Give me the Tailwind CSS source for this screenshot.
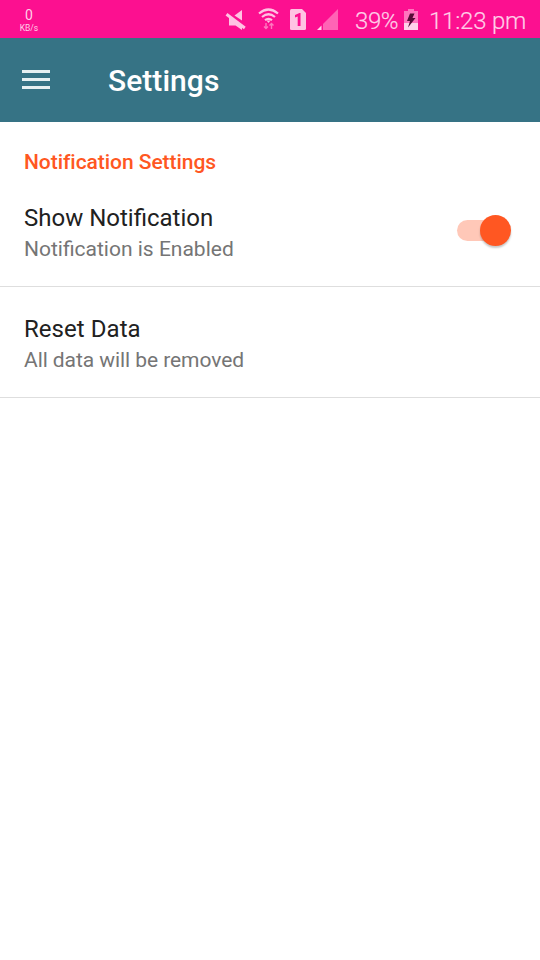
<!DOCTYPE html>
<html lang="en">
<head>
<meta charset="utf-8">
<title>Settings</title>
<script src="https://cdn.jsdelivr.net/npm/@tailwindcss/browser@4"></script>
</head>
<body class="w-[540px] h-[960px] overflow-hidden bg-white font-[Roboto,sans-serif]">
<div class="flex h-[38px] bg-[#fc1090] text-[#ffcfe8]">
  <div class="ml-[19px] w-5 pt-[7px] flex flex-col items-center">
    <span class="text-[14px] leading-[17px]">0</span>
    <span class="text-[8.500px] leading-[9px] whitespace-nowrap">KB/s</span>
  </div>
  <svg class="ml-[186px] w-[115px] h-[38px] shrink-0" viewBox="225 0 115 38" fill="none">
    <path d="M234.500 15.500L242 10V20.500Z" fill="#ffc3e3"/>
    <path d="M229 16L242 25V30L235.500 25.500H229Z" fill="#ffc3e3"/>
    <path d="M226.500 14.300L244.800 28" stroke="#ffc3e3" stroke-width="3"/>
    <path d="M259 13.500Q268.500 5.500 278 13.500M262 17Q268.500 11.500 275 17M265 20.200Q268.500 17.500 272 20.200" stroke="#ffc3e3" stroke-width="2.200"/>
    <path d="M266.500 20.500h4l-2 2.500z" fill="#ffc3e3"/>
    <path d="M266 23v5.500M264 26.500l2 2 2-2M271.500 29v-5.500M269.500 25.500l2-2 2 2" stroke="#ff77bf" stroke-width="1.400"/>
    <path d="M291.500 9H302L306 13V28.500Q306 30 304.500 30H291.500Q290 30 290 28.500V10.500Q290 9 291.500 9Z" fill="#ffc3e3"/>
    <path d="M300.500 13V26H297.700V16.500L295 17.500V15L299.500 13Z" fill="#fc1090"/>
    <path d="M338 9V30H323V24Z" fill="#ff64b5"/>
    <path d="M317 30L321.500 25.500V30Z" fill="#ffd3ea"/>
  </svg>
  <span class="ml-[15px] w-[49px] text-[24px] font-light leading-[42px] tracking-[-0.4px] whitespace-nowrap [-webkit-text-stroke:0.2px_#ffcfe8]">39%</span>
  <svg class="w-[14px] h-[38px] shrink-0" viewBox="404 0 14 38">
    <path d="M404 11h4V9h6v2h4v19h-14z" fill="#ff75be"/>
    <path d="M404 23h14v7h-14z" fill="#ffd3ea"/>
    <path d="M410 13.500h4.500l-2 4.500h3l-7.500 9.500 2-6.500h-3z" fill="#550c36"/>
  </svg>
  <span class="ml-[11px] text-[24px] font-light leading-[42px] tracking-[-0.2px] whitespace-nowrap [-webkit-text-stroke:0.2px_#ffcfe8]">11:23 pm</span>
</div>
<header class="flex items-center h-[84px] bg-[#367385] text-white">
  <div class="ml-[22px] mb-px w-7 flex flex-col gap-[5px]">
    <div class="h-[3px] bg-[#e6f0f2]"></div>
    <div class="h-[3px] bg-[#e6f0f2]"></div>
    <div class="h-[3px] bg-[#e6f0f2]"></div>
  </div>
  <h1 class="ml-[58px] pt-0.5 text-[30px] leading-10 font-medium tracking-[0.05px]">Settings</h1>
</header>
<main>
  <h2 class="h-20 px-6 text-[21px] leading-[80px] font-medium tracking-[-0.05px] text-[#ff5722]">Notification Settings</h2>
  <div class="flex justify-between px-6 pb-[22px] border-b border-[#dedede]">
    <div>
      <p class="text-[24px] leading-8 text-[#212121]">Show Notification</p>
      <p class="text-[21px] leading-[30px] text-[#757575]">Notification is Enabled</p>
    </div>
    <div class="relative mt-[18px] mr-[5px] w-[54px] h-[21px] rounded-full">
      <div class="w-[46px] h-[21px] rounded-full bg-[#ffc8b8]"></div>
      <div class="absolute right-0 -top-[5px] size-[31px] rounded-full bg-[#ff5722] shadow-[0_2px_2px_rgba(0,0,0,0.22)]"></div>
    </div>
  </div>
  <div class="px-6 pt-[26px] pb-[22px] border-b border-[#dedede]">
    <p class="text-[24px] leading-8 tracking-[0.05px] text-[#212121]">Reset Data</p>
    <p class="text-[21px] leading-[30px] tracking-[-0.07px] text-[#757575]">All data will be removed</p>
  </div>
</main>
</body>
</html>
